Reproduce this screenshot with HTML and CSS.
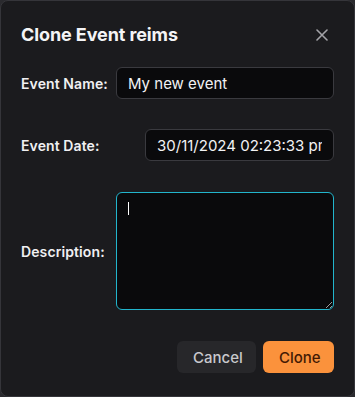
FILE: index.html
```html
<!DOCTYPE html>
<html lang="en">
<head>
<meta charset="UTF-8">
<meta name="viewport" content="width=device-width, initial-scale=1.0">
<title>Clone Event</title>
<link rel="stylesheet" href="styles.css">
</head>
<body>
<div class="dialog">
    <div class="header">
        <h2>Clone Event reims</h2>
        <button class="close" type="button" aria-label="Close">
            <svg width="12" height="12" viewBox="0 0 12 12"><path d="M1 1L11 11M11 1L1 11" stroke="#a3a3a8" stroke-width="1.6" stroke-linecap="round"/></svg>
        </button>
    </div>
    <form class="form">
        <div class="row">
            <label for="name">Event Name:</label>
            <input id="name" class="field grow" type="text" value="My new event">
        </div>
        <div class="row">
            <label for="date">Event Date:</label>
            <input id="date" class="field date" type="text" value="30/11/2024 02:23:33 pm">
        </div>
        <div class="row desc">
            <label for="desc">Description:</label>
            <div class="desc-box">
                <textarea id="desc" class="field"></textarea>
                <span class="caret"></span>
            </div>
        </div>
        <div class="actions">
            <button type="button" class="btn cancel">Cancel</button>
            <button type="submit" class="btn clone">Clone</button>
        </div>
    </form>
</div>
</body>
</html>
```

FILE: styles.css
```css
html, body {
    margin: 0;
    padding: 0;
    background-color: #2a2a2e;
}
body {
    font-family: Inter, "Noto Sans", sans-serif;
    color: #ececef;
}
.dialog {
    box-sizing: border-box;
    width: 355px;
    height: 397px;
    padding: 22px 20px 23px;
    background-color: #1b1b1e;
    border: 1px solid #35353a;
    border-radius: 8px;
    display: flex;
    flex-direction: column;
}
.header {
    display: flex;
    justify-content: space-between;
    align-items: center;
    height: 24px;
    margin-bottom: 21px;
}
.header h2 {
    margin: 0;
    font-size: 18px;
    font-weight: 700;
    color: #f4f4f6;
    letter-spacing: -0.1px;
}
.close {
    background: none;
    border: none;
    padding: 0;
    margin-right: 6px;
    width: 12px;
    height: 12px;
    display: flex;
    cursor: pointer;
}
.form {
    display: flex;
    flex-direction: column;
}
.row {
    display: flex;
    align-items: center;
    justify-content: space-between;
    gap: 8px;
    margin-bottom: 30px;
}
.row.desc {
    margin-top: 1px;
    margin-bottom: 31px;
}
label {
    font-size: 14px;
    font-weight: 600;
    color: #f0f0f2;
    white-space: nowrap;
    letter-spacing: 0.1px;
}
.field {
    box-sizing: border-box;
    height: 32px;
    padding: 0 11px;
    background-color: #0a0a0c;
    border: 1px solid #3a3a3f;
    border-radius: 6px;
    color: #f2f2f4;
    font-family: Inter, "Noto Sans", sans-serif;
    font-size: 15px;
    outline: none;
}
.grow {
    flex: 0 0 218px;
    width: 218px;
}
.date {
    width: 189px;
    flex: 0 0 189px;
}
.desc-box {
    position: relative;
    flex: 0 0 218px;
    width: 218px;
    display: flex;
}
textarea.field {
    width: 100%;
    height: 118px;
    padding: 8px 11px;
    border-color: #22b5cc;
    resize: vertical;
}
.caret {
    position: absolute;
    left: 12px;
    top: 10px;
    width: 1px;
    height: 13px;
    background-color: #ffffff;
}
.actions {
    display: flex;
    justify-content: flex-end;
    gap: 7px;
}
.btn {
    height: 32px;
    padding: 0 16px;
    border: none;
    border-radius: 6px;
    font-family: Inter, "Noto Sans", sans-serif;
    font-size: 15px;
    font-weight: 500;
    cursor: pointer;
}
.cancel {
    width: 79px;
    background-color: #27272a;
    color: #c9c9cd;
}
.clone {
    width: 71px;
    background-color: #fb923c;
    color: #431a04;
}
```
